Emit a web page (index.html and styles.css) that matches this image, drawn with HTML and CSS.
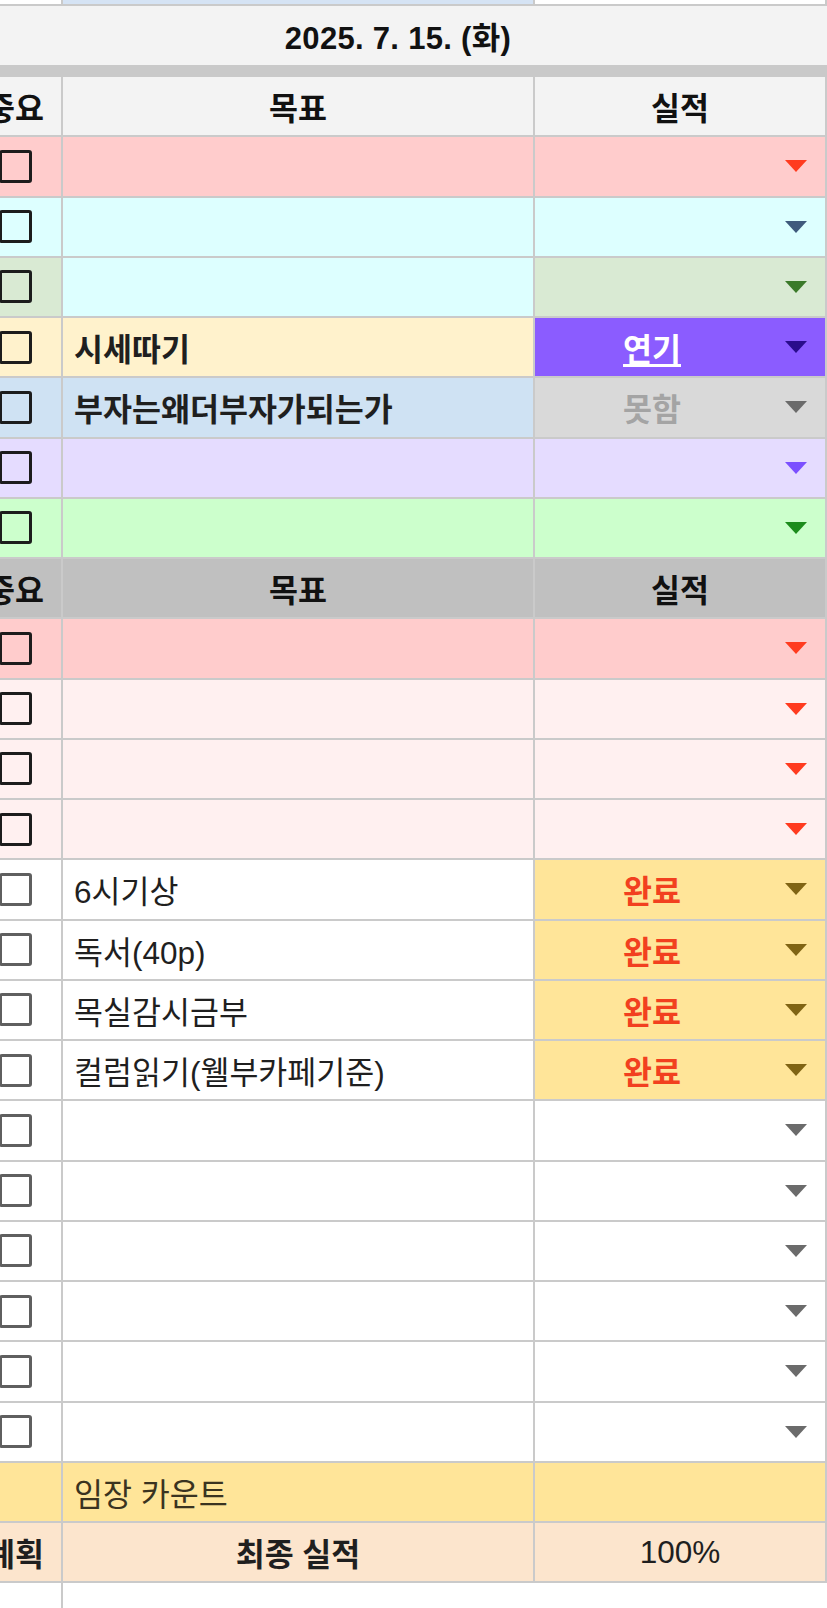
FILE: index.html
```html
<!DOCTYPE html>
<html lang="ko">
<head>
<meta charset="utf-8">
<title>2025. 7. 15. (화)</title>
<link rel="stylesheet" href="styles.css">
</head>
<body>
<div class="sheet">
  <div class="row top">
    <div class="cell"></div>
    <div class="cell bg-topblue"></div>
    <div class="cell"></div>
  </div>
  <div class="date">2025. 7. 15. (화)</div>
  <div class="bar"></div>

  <div class="row head bg-light">
    <div class="cell center">중요</div>
    <div class="cell center">목표</div>
    <div class="cell center">실적</div>
  </div>

  <div class="row">
    <div class="cell center bg-pink"><span class="cb"></span></div>
    <div class="cell bg-pink"></div>
    <div class="cell sel bg-pink"><span class="val"></span><span class="dd"><i class="tri a-red"></i></span></div>
  </div>
  <div class="row">
    <div class="cell center bg-cyan"><span class="cb"></span></div>
    <div class="cell bg-cyan"></div>
    <div class="cell sel bg-cyan"><span class="val"></span><span class="dd"><i class="tri a-slate"></i></span></div>
  </div>
  <div class="row">
    <div class="cell center bg-sage"><span class="cb"></span></div>
    <div class="cell bg-cyan"></div>
    <div class="cell sel bg-sage"><span class="val"></span><span class="dd"><i class="tri a-forest"></i></span></div>
  </div>
  <div class="row">
    <div class="cell center bg-cream"><span class="cb"></span></div>
    <div class="cell text bold bg-cream">시세따기</div>
    <div class="cell sel bg-purple"><span class="val v-delay">연기</span><span class="dd"><i class="tri a-navy"></i></span></div>
  </div>
  <div class="row">
    <div class="cell center bg-sky"><span class="cb"></span></div>
    <div class="cell text bold bg-sky">부자는왜더부자가되는가</div>
    <div class="cell sel bg-gray"><span class="val v-fail">못함</span><span class="dd"><i class="tri a-gray"></i></span></div>
  </div>
  <div class="row">
    <div class="cell center bg-lav"><span class="cb"></span></div>
    <div class="cell bg-lav"></div>
    <div class="cell sel bg-lav"><span class="val"></span><span class="dd"><i class="tri a-violet"></i></span></div>
  </div>
  <div class="row">
    <div class="cell center bg-mint"><span class="cb"></span></div>
    <div class="cell bg-mint"></div>
    <div class="cell sel bg-mint"><span class="val"></span><span class="dd"><i class="tri a-green"></i></span></div>
  </div>

  <div class="row head bg-mid">
    <div class="cell center">중요</div>
    <div class="cell center">목표</div>
    <div class="cell center">실적</div>
  </div>

  <div class="row">
    <div class="cell center bg-pink"><span class="cb"></span></div>
    <div class="cell bg-pink"></div>
    <div class="cell sel bg-pink"><span class="val"></span><span class="dd"><i class="tri a-red"></i></span></div>
  </div>
  <div class="row">
    <div class="cell center bg-blush"><span class="cb"></span></div>
    <div class="cell bg-blush"></div>
    <div class="cell sel bg-blush"><span class="val"></span><span class="dd"><i class="tri a-red"></i></span></div>
  </div>
  <div class="row">
    <div class="cell center bg-blush"><span class="cb"></span></div>
    <div class="cell bg-blush"></div>
    <div class="cell sel bg-blush"><span class="val"></span><span class="dd"><i class="tri a-red"></i></span></div>
  </div>
  <div class="row">
    <div class="cell center bg-blush"><span class="cb"></span></div>
    <div class="cell bg-blush"></div>
    <div class="cell sel bg-blush"><span class="val"></span><span class="dd"><i class="tri a-red"></i></span></div>
  </div>

  <div class="row">
    <div class="cell center"><span class="cb cb-soft"></span></div>
    <div class="cell text">6시기상</div>
    <div class="cell sel bg-yellow"><span class="val v-done">완료</span><span class="dd"><i class="tri a-gold"></i></span></div>
  </div>
  <div class="row">
    <div class="cell center"><span class="cb cb-soft"></span></div>
    <div class="cell text">독서(40p)</div>
    <div class="cell sel bg-yellow"><span class="val v-done">완료</span><span class="dd"><i class="tri a-gold"></i></span></div>
  </div>
  <div class="row">
    <div class="cell center"><span class="cb cb-soft"></span></div>
    <div class="cell text">목실감시금부</div>
    <div class="cell sel bg-yellow"><span class="val v-done">완료</span><span class="dd"><i class="tri a-gold"></i></span></div>
  </div>
  <div class="row">
    <div class="cell center"><span class="cb cb-soft"></span></div>
    <div class="cell text">컬럼읽기(웰부카페기준)</div>
    <div class="cell sel bg-yellow"><span class="val v-done">완료</span><span class="dd"><i class="tri a-gold"></i></span></div>
  </div>

  <div class="row">
    <div class="cell center"><span class="cb cb-soft"></span></div>
    <div class="cell"></div>
    <div class="cell sel"><span class="val"></span><span class="dd"><i class="tri a-gray"></i></span></div>
  </div>
  <div class="row">
    <div class="cell center"><span class="cb cb-soft"></span></div>
    <div class="cell"></div>
    <div class="cell sel"><span class="val"></span><span class="dd"><i class="tri a-gray"></i></span></div>
  </div>
  <div class="row">
    <div class="cell center"><span class="cb cb-soft"></span></div>
    <div class="cell"></div>
    <div class="cell sel"><span class="val"></span><span class="dd"><i class="tri a-gray"></i></span></div>
  </div>
  <div class="row">
    <div class="cell center"><span class="cb cb-soft"></span></div>
    <div class="cell"></div>
    <div class="cell sel"><span class="val"></span><span class="dd"><i class="tri a-gray"></i></span></div>
  </div>
  <div class="row">
    <div class="cell center"><span class="cb cb-soft"></span></div>
    <div class="cell"></div>
    <div class="cell sel"><span class="val"></span><span class="dd"><i class="tri a-gray"></i></span></div>
  </div>
  <div class="row">
    <div class="cell center"><span class="cb cb-soft"></span></div>
    <div class="cell"></div>
    <div class="cell sel"><span class="val"></span><span class="dd"><i class="tri a-gray"></i></span></div>
  </div>

  <div class="row">
    <div class="cell bg-yellow"></div>
    <div class="cell text t-count bg-yellow">임장 카운트</div>
    <div class="cell bg-yellow"></div>
  </div>
  <div class="row">
    <div class="cell center bold bg-peach">계획</div>
    <div class="cell center bold bg-peach">최종 실적</div>
    <div class="cell center bg-peach">100%</div>
  </div>
  <div class="row tail">
    <div class="cell"></div>
    <div class="cell noline"></div>
    <div class="cell noline"></div>
  </div>
</div>
</body>
</html>
```

FILE: styles.css
```css
html, body {
  margin: 0;
  padding: 0;
  background: #ffffff;
}

body {
  font-family: "Liberation Sans", "Noto Sans CJK KR", sans-serif;
  font-size: 31.5px;
  color: #1f1f1f;
  overflow: hidden;
}

.sheet {
  width: 858px;
  margin-left: -31px;
}

.row {
  display: grid;
  grid-template-columns: 94px 472px 1fr;
  height: 60.25px;
  box-sizing: border-box;
  border-bottom: 2px solid #cacaca;
}

.row.top {
  height: 6px;
}

.row.tail {
  height: 40px;
  border-bottom: none;
}

.cell {
  box-sizing: border-box;
  border-right: 2px solid #cacaca;
  display: flex;
  align-items: center;
  min-width: 0;
  white-space: nowrap;
  overflow: hidden;
}

.cell.noline {
  border-right: none;
}

.center {
  justify-content: center;
}

.text {
  padding-left: 11px;
}

.bold {
  font-weight: bold;
}

.head .cell {
  font-weight: bold;
  justify-content: center;
  color: #111;
}

.date {
  height: 59px;
  background: #f3f3f3;
  font-weight: bold;
  display: flex;
  align-items: center;
  justify-content: center;
  color: #111;
  font-size: 31px;
  letter-spacing: 0.3px;
}

.bar {
  height: 12px;
  background: #c9c9c9;
}

/* checkbox */
.cb {
  display: block;
  width: 33px;
  height: 33px;
  box-sizing: border-box;
  border: 3px solid #1c1c1c;
  border-radius: 3px;
}

.cb-soft {
  border-color: #5f5f5f;
}

/* dropdown cell */
.sel {
  justify-content: flex-start;
}

.val {
  flex: 1;
  text-align: center;
  font-weight: bold;
}

.dd {
  width: 56px;
  flex: none;
  display: flex;
  align-items: center;
  padding-left: 16px;
  box-sizing: border-box;
}

.tri {
  display: block;
  width: 0;
  height: 0;
  border-left: 11px solid transparent;
  border-right: 11px solid transparent;
  border-top: 12px solid #6b6b6b;
}

.a-red { border-top-color: #ff3b1f; }
.a-slate { border-top-color: #3f5a7d; }
.a-forest { border-top-color: #3b7a2a; }
.a-navy { border-top-color: #2a0c8c; }
.a-gray { border-top-color: #6b6b6b; }
.a-violet { border-top-color: #7b50ff; }
.a-green { border-top-color: #1c8c1c; }
.a-gold { border-top-color: #806414; }

.v-delay {
  color: #ffffff;
  text-decoration: underline;
  text-underline-offset: 3px;
}

.v-fail {
  color: #a4a4a4;
}

.v-done {
  color: #f2401f;
}

.t-count {
  color: #3a3320;
}

/* backgrounds */
.bg-topblue { background: #d5e3f4; }
.bg-light { background: #f3f3f3; }
.bg-mid { background: #c0c0c0; }
.bg-pink { background: #ffcccc; }
.bg-cyan { background: #ddffff; }
.bg-sage { background: #d9ead3; }
.bg-cream { background: #fff2cc; }
.bg-purple { background: #8b5cff; }
.bg-sky { background: #cfe2f3; }
.bg-gray { background: #d9d9d9; }
.bg-lav { background: #e5dcff; }
.bg-mint { background: #ccffcc; }
.bg-blush { background: #fff0f0; }
.bg-yellow { background: #ffe599; }
.bg-peach { background: #fce5cd; }
```
